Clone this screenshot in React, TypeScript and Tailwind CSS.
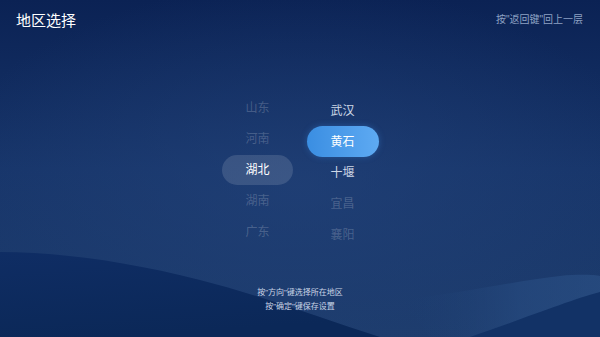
import React from "react";

const font = { fontFamily: '"Liberation Sans", "Noto Sans CJK SC", "Noto Sans", sans-serif' };

function Item({ label, tone }: { label: string; tone: "dim" | "near" | "sel" | "active" }) {
  const base = "h-[31px] w-[72px] flex items-center justify-center text-[12px] leading-none";
  if (tone === "active")
    return (
      <div className={base}>
        <div className="h-[31px] w-[72px] rounded-full bg-gradient-to-r from-[#3a8ee2] to-[#5eaaf2] text-white flex items-center justify-center shadow-[0_0_6px_rgba(60,140,230,0.35)]">
          {label}
        </div>
      </div>
    );
  if (tone === "sel")
    return (
      <div className={base}>
        <div className="h-[30px] w-[71px] rounded-full bg-[rgba(255,255,255,0.13)] text-white flex items-center justify-center">
          {label}
        </div>
      </div>
    );
  return (
    <div className={`${base} ${tone === "near" ? "text-[#cdd7e6]" : "text-[rgba(255,255,255,0.2)]"}`}>{label}</div>
  );
}

export default function App() {
  return (
    <div
      className="relative w-[600px] h-[337px] overflow-hidden bg-gradient-to-b from-[#0b2254] via-[#17356a] to-[#1d3c6c] text-white"
      style={font}
    >
      <svg className="absolute inset-0" width="600" height="337" viewBox="0 0 600 337">
        <defs>
          <radialGradient id="glow" cx="0.5" cy="0.55" r="0.6">
            <stop offset="0" stopColor="#23437a" stopOpacity="0.6" />
            <stop offset="1" stopColor="#23437a" stopOpacity="0" />
          </radialGradient>
          <linearGradient id="dune1" x1="0" y1="0" x2="0.3" y2="1">
            <stop offset="0" stopColor="#0f2d64" />
            <stop offset="1" stopColor="#0b2858" />
          </linearGradient>
          <linearGradient id="dune2" x1="0" y1="0" x2="1" y2="0">
            <stop offset="0" stopColor="#1d3d70" stopOpacity="0" />
            <stop offset="0.6" stopColor="#264a7f" />
            <stop offset="1" stopColor="#2a4f84" />
          </linearGradient>
        </defs>
        <rect width="600" height="337" fill="url(#glow)" />
        <path d="M0 252 C 60 252, 130 262, 200 280 C 260 295, 320 318, 380 337 L 0 337 Z" fill="url(#dune1)" />
        <path d="M400 300 C 470 292, 520 280, 560 276 C 580 274, 595 275, 600 276 L 600 337 L 430 337 Z" fill="url(#dune2)" opacity="0.7" />
        <path d="M470 337 C 520 320, 570 300, 600 292 L 600 337 Z" fill="#123266" />
      </svg>

      <div className="relative flex flex-col h-full">
        <div className="flex items-center justify-between h-[40px] pl-[16px] pr-[17px]">
          <div className="text-[15px] text-white leading-none">地区选择</div>
          <div className="text-[10px] text-[#8ea2c4] leading-none">按"返回键"回上一层</div>
        </div>

        <div className="flex justify-center gap-[13px] mt-[52px]">
          <div className="flex flex-col">
            <Item label="山东" tone="dim" />
            <Item label="河南" tone="dim" />
            <Item label="湖北" tone="sel" />
            <Item label="湖南" tone="dim" />
            <Item label="广东" tone="dim" />
          </div>
          <div className="flex flex-col mt-[3px]">
            <Item label="武汉" tone="near" />
            <Item label="黄石" tone="active" />
            <Item label="十堰" tone="near" />
            <Item label="宜昌" tone="dim" />
            <Item label="襄阳" tone="dim" />
          </div>
        </div>

        <div className="flex flex-col items-center mt-[38px] gap-[4px] text-[8px] leading-[10px] text-[#c9d4e6]">
          <div>按"方向"键选择所在地区</div>
          <div>按"确定"键保存设置</div>
        </div>
      </div>
    </div>
  );
}
